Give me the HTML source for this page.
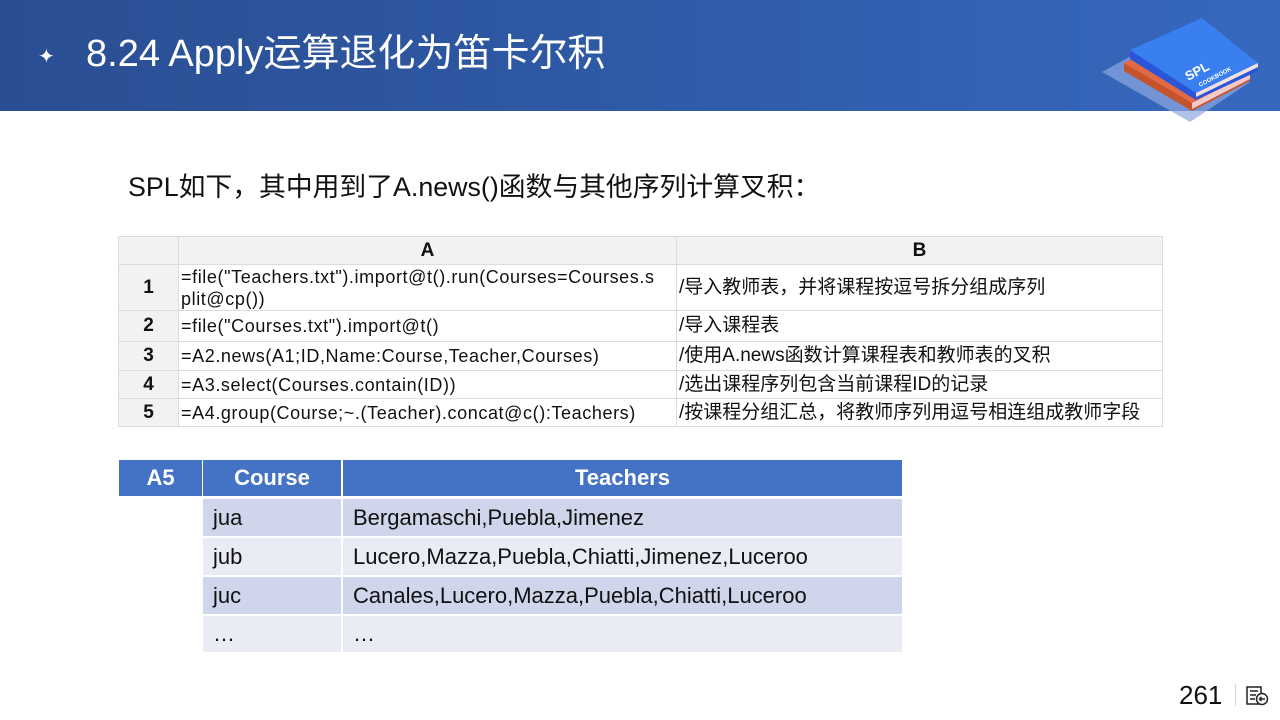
<!DOCTYPE html>
<html><head><meta charset="utf-8"><style>
*{margin:0;padding:0;box-sizing:border-box}
body{width:1280px;height:720px;position:relative;background:#fff;font-family:"Liberation Sans","Noto Sans CJK SC",sans-serif;overflow:hidden}
.hdr{position:absolute;left:0;top:0;width:1280px;height:111px;background:linear-gradient(90deg,#2a4e93 0%,#2f5aa6 50%,#3768bf 100%)}
.title{position:absolute;left:86px;top:31px;color:#fff;font-size:38px;line-height:46px;white-space:nowrap}
.star{position:absolute;left:38px;top:44px;color:#fff;font-size:20px}
.sub{position:absolute;left:128px;top:165px;font-size:26.8px;color:#111;white-space:nowrap}
.c{position:absolute;border:1px solid #dcdcdc;font-size:18px;letter-spacing:0.6px;color:#111;padding-left:2px;line-height:22px;display:flex;align-items:center;overflow:hidden;white-space:nowrap}
.b{font-size:19px;letter-spacing:0}
.g{background:#f2f2f2;justify-content:center;font-weight:bold;font-size:19px;padding:0;letter-spacing:0}
.t{position:absolute;font-size:22px;color:#111;padding-left:10px;display:flex;align-items:center;border-right:2px solid #fff;border-bottom:2px solid #fff}
.h{background:#4472c4;color:#fff;font-weight:bold;justify-content:center;padding:0}
.d1{background:#cfd5ea}.d2{background:#e9ebf5}
</style></head><body>
<div class="hdr"></div>
<div class="star">✦</div>
<div class="title">8.24 Apply运算退化为笛卡尔积</div>
<svg style="position:absolute;left:1100px;top:15px" width="160" height="110" viewBox="0 0 160 110">
<polygon points="2,57 60,25 150,67 90,107" fill="#8fa8e0" opacity="0.7"/>
<polygon points="24,48 88,18 150,58 150,66 92,96 24,56" fill="#c4532e"/>
<polygon points="24,48 88,18 150,58 92,88" fill="#e06a45"/>
<polygon points="92,88 150,58 150,64 92,94" fill="#f5c8c8"/>
<polygon points="30,35 102,3 158,48 158,56 96,85 30,44" fill="#2a55d8"/>
<polygon points="30,35 102,3 158,48 96,78" fill="#3a7ff0"/>
<polygon points="96,78 158,48 158,52 96,82" fill="#f5e0e0"/>
<text x="88" y="66" fill="#fff" font-size="13" font-weight="bold" transform="rotate(-28 88 66)" font-family="Liberation Sans">SPL</text>
<text x="100" y="72" fill="#fff" font-size="6" font-weight="bold" transform="rotate(-28 100 72)" font-family="Liberation Sans">COOKBOOK</text>
</svg>
<div class="sub">SPL如下，其中用到了A.news()函数与其他序列计算叉积：</div>

<div class="c g" style="left:118px;top:236px;width:61px;height:29px"></div>
<div class="c g" style="left:178px;top:236px;width:499px;height:29px">A</div>
<div class="c g" style="left:676px;top:236px;width:487px;height:29px">B</div>

<div class="c g" style="left:118px;top:264px;width:61px;height:47px;background:#f2f2f2">1</div>
<div class="c" style="left:178px;top:264px;width:499px;height:47px">=file("Teachers.txt").import@t().run(Courses=Courses.s<br>plit@cp())</div>
<div class="c b" style="left:676px;top:264px;width:487px;height:47px">/导入教师表，并将课程按逗号拆分组成序列</div>

<div class="c g" style="left:118px;top:310px;width:61px;height:32px">2</div>
<div class="c" style="left:178px;top:310px;width:499px;height:32px">=file("Courses.txt").import@t()</div>
<div class="c b" style="left:676px;top:310px;width:487px;height:32px">/导入课程表</div>

<div class="c g" style="left:118px;top:341px;width:61px;height:30px">3</div>
<div class="c" style="left:178px;top:341px;width:499px;height:30px">=A2.news(A1;ID,Name:Course,Teacher,Courses)</div>
<div class="c b" style="left:676px;top:341px;width:487px;height:30px">/使用A.news函数计算课程表和教师表的叉积</div>

<div class="c g" style="left:118px;top:370px;width:61px;height:29px">4</div>
<div class="c" style="left:178px;top:370px;width:499px;height:29px">=A3.select(Courses.contain(ID))</div>
<div class="c b" style="left:676px;top:370px;width:487px;height:29px">/选出课程序列包含当前课程ID的记录</div>

<div class="c g" style="left:118px;top:398px;width:61px;height:29px">5</div>
<div class="c" style="left:178px;top:398px;width:499px;height:29px">=A4.group(Course;~.(Teacher).concat@c():Teachers)</div>
<div class="c b" style="left:676px;top:398px;width:487px;height:29px">/按课程分组汇总，将教师序列用逗号相连组成教师字段</div>

<div class="t h" style="left:119px;top:460px;width:85px;height:38px">A5</div>
<div class="t h" style="left:203px;top:460px;width:140px;height:38px">Course</div>
<div class="t h" style="left:343px;top:460px;width:559px;height:38px;border-right:0">Teachers</div>

<div class="t d1" style="left:203px;top:499px;width:140px;height:39px">jua</div>
<div class="t d1" style="left:343px;top:499px;width:559px;height:39px;border-right:0">Bergamaschi,Puebla,Jimenez</div>
<div class="t d2" style="left:203px;top:538px;width:140px;height:39px">jub</div>
<div class="t d2" style="left:343px;top:538px;width:559px;height:39px;border-right:0">Lucero,Mazza,Puebla,Chiatti,Jimenez,Luceroo</div>
<div class="t d1" style="left:203px;top:577px;width:140px;height:39px">juc</div>
<div class="t d1" style="left:343px;top:577px;width:559px;height:39px;border-right:0">Canales,Lucero,Mazza,Puebla,Chiatti,Luceroo</div>
<div class="t d2" style="left:203px;top:616px;width:140px;height:38px">…</div>
<div class="t d2" style="left:343px;top:616px;width:559px;height:38px;border-right:0">…</div>

<div style="position:absolute;left:1179px;top:680px;font-size:26px;color:#111">261</div>
<div style="position:absolute;left:1235px;top:684px;width:1px;height:22px;background:#c8d4ea"></div>
<svg style="position:absolute;left:1245px;top:685px" width="24" height="22" viewBox="0 0 24 22">
<rect x="2" y="2" width="14" height="17" fill="none" stroke="#222" stroke-width="1.5"/>
<line x1="5" y1="6" x2="13" y2="6" stroke="#222" stroke-width="1.5"/>
<line x1="5" y1="10" x2="11" y2="10" stroke="#222" stroke-width="1.5"/>
<line x1="5" y1="14" x2="10" y2="14" stroke="#222" stroke-width="1.5"/>
<circle cx="17" cy="14" r="5.5" fill="#fff" stroke="#222" stroke-width="1.5"/>
<path d="M20 14H14.5M16.5 12L14.5 14L16.5 16" fill="none" stroke="#222" stroke-width="1.5"/>
</svg>
</body></html>
